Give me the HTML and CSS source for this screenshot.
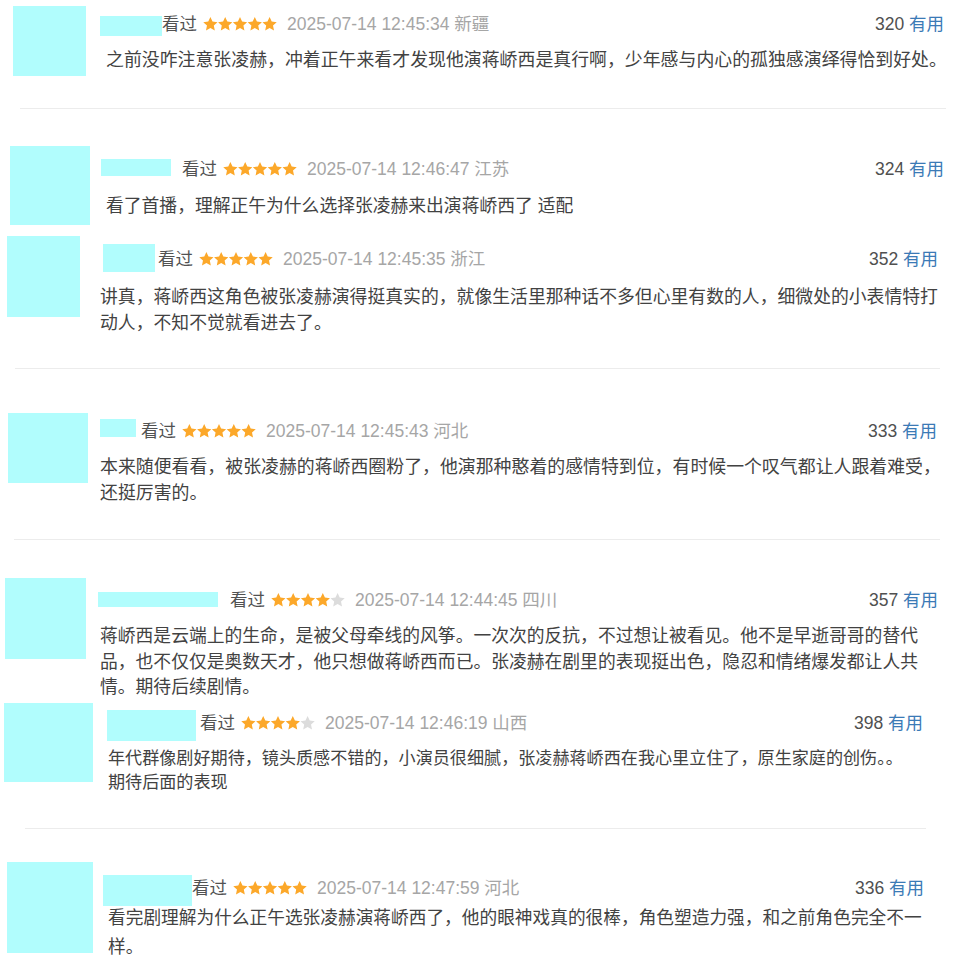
FILE: index.html
```html
<!DOCTYPE html>
<html lang="zh-CN">
<head>
<meta charset="utf-8">
<title>短评</title>
<link rel="stylesheet" href="styles.css">
</head>
<body>
<svg class="svg-defs" width="0" height="0" aria-hidden="true">
  <defs>
    <symbol id="star" viewBox="0 0 14.8 14">
      <polygon points="7.4,0 9.52,4.59 14.53,5.18 10.82,8.61 11.81,13.57 7.4,11.1 2.99,13.57 3.98,8.61 0.27,5.18 5.28,4.59"/>
    </symbol>
  </defs>
</svg>
<div class="page">

  <div class="review r1">
    <div class="avatar"></div>
    <div class="body">
      <div class="meta">
        <span class="mask"></span>
        <span class="watched">看过</span>
        <svg class="stars" viewBox="0 0 74 14"><use href="#star" class="on" x="0" width="14.8" height="14"/><use href="#star" class="on" x="14.8" width="14.8" height="14"/><use href="#star" class="on" x="29.6" width="14.8" height="14"/><use href="#star" class="on" x="44.4" width="14.8" height="14"/><use href="#star" class="on" x="59.2" width="14.8" height="14"/></svg>
        <span class="time">2025-07-14 12:45:34 新疆</span>
        <span class="votes"><span class="count">320</span> <span class="useful">有用</span></span>
      </div>
      <p class="text">之前没咋注意张凌赫，冲着正午来看才发现他演蒋峤西是真行啊，少年感与内心的孤独感演绎得恰到好处。</p>
    </div>
  </div>
  <div class="divider d1"></div>

  <div class="review r2">
    <div class="avatar"></div>
    <div class="body">
      <div class="meta">
        <span class="mask"></span>
        <span class="watched">看过</span>
        <svg class="stars" viewBox="0 0 74 14"><use href="#star" class="on" x="0" width="14.8" height="14"/><use href="#star" class="on" x="14.8" width="14.8" height="14"/><use href="#star" class="on" x="29.6" width="14.8" height="14"/><use href="#star" class="on" x="44.4" width="14.8" height="14"/><use href="#star" class="on" x="59.2" width="14.8" height="14"/></svg>
        <span class="time">2025-07-14 12:46:47 江苏</span>
        <span class="votes"><span class="count">324</span> <span class="useful">有用</span></span>
      </div>
      <p class="text">看了首播，理解正午为什么选择张凌赫来出演蒋峤西了 适配</p>
    </div>
  </div>

  <div class="review r3">
    <div class="avatar"></div>
    <div class="body">
      <div class="meta">
        <span class="mask"></span>
        <span class="watched">看过</span>
        <svg class="stars" viewBox="0 0 74 14"><use href="#star" class="on" x="0" width="14.8" height="14"/><use href="#star" class="on" x="14.8" width="14.8" height="14"/><use href="#star" class="on" x="29.6" width="14.8" height="14"/><use href="#star" class="on" x="44.4" width="14.8" height="14"/><use href="#star" class="on" x="59.2" width="14.8" height="14"/></svg>
        <span class="time">2025-07-14 12:45:35 浙江</span>
        <span class="votes"><span class="count">352</span> <span class="useful">有用</span></span>
      </div>
      <p class="text">讲真，蒋峤西这角色被张凌赫演得挺真实的，就像生活里那种话不多但心里有数的人，细微处的小表情特打<br>动人，不知不觉就看进去了。</p>
    </div>
  </div>
  <div class="divider d2"></div>

  <div class="review r4">
    <div class="avatar"></div>
    <div class="body">
      <div class="meta">
        <span class="mask"></span>
        <span class="watched">看过</span>
        <svg class="stars" viewBox="0 0 74 14"><use href="#star" class="on" x="0" width="14.8" height="14"/><use href="#star" class="on" x="14.8" width="14.8" height="14"/><use href="#star" class="on" x="29.6" width="14.8" height="14"/><use href="#star" class="on" x="44.4" width="14.8" height="14"/><use href="#star" class="on" x="59.2" width="14.8" height="14"/></svg>
        <span class="time">2025-07-14 12:45:43 河北</span>
        <span class="votes"><span class="count">333</span> <span class="useful">有用</span></span>
      </div>
      <p class="text">本来随便看看，被张凌赫的蒋峤西圈粉了，他演那种憨着的感情特到位，有时候一个叹气都让人跟着难受，<br>还挺厉害的。</p>
    </div>
  </div>
  <div class="divider d3"></div>

  <div class="review r5">
    <div class="avatar"></div>
    <div class="body">
      <div class="meta">
        <span class="mask"></span>
        <span class="watched">看过</span>
        <svg class="stars" viewBox="0 0 74 14"><use href="#star" class="on" x="0" width="14.8" height="14"/><use href="#star" class="on" x="14.8" width="14.8" height="14"/><use href="#star" class="on" x="29.6" width="14.8" height="14"/><use href="#star" class="on" x="44.4" width="14.8" height="14"/><use href="#star" class="off" x="59.2" width="14.8" height="14"/></svg>
        <span class="time">2025-07-14 12:44:45 四川</span>
        <span class="votes"><span class="count">357</span> <span class="useful">有用</span></span>
      </div>
      <p class="text">蒋峤西是云端上的生命，是被父母牵线的风筝。一次次的反抗，不过想让被看见。他不是早逝哥哥的替代<br>品，也不仅仅是奥数天才，他只想做蒋峤西而已。张凌赫在剧里的表现挺出色，隐忍和情绪爆发都让人共<br>情。期待后续剧情。</p>
    </div>
  </div>

  <div class="review r6">
    <div class="avatar"></div>
    <div class="body">
      <div class="meta">
        <span class="mask"></span>
        <span class="watched">看过</span>
        <svg class="stars" viewBox="0 0 74 14"><use href="#star" class="on" x="0" width="14.8" height="14"/><use href="#star" class="on" x="14.8" width="14.8" height="14"/><use href="#star" class="on" x="29.6" width="14.8" height="14"/><use href="#star" class="on" x="44.4" width="14.8" height="14"/><use href="#star" class="off" x="59.2" width="14.8" height="14"/></svg>
        <span class="time">2025-07-14 12:46:19 山西</span>
        <span class="votes"><span class="count">398</span> <span class="useful">有用</span></span>
      </div>
      <p class="text">年代群像剧好期待，镜头质感不错的，小演员很细腻，张凌赫蒋峤西在我心里立住了，原生家庭的创伤。。<br>期待后面的表现</p>
    </div>
  </div>
  <div class="divider d4"></div>

  <div class="review r7">
    <div class="avatar"></div>
    <div class="body">
      <div class="meta">
        <span class="mask"></span>
        <span class="watched">看过</span>
        <svg class="stars" viewBox="0 0 74 14"><use href="#star" class="on" x="0" width="14.8" height="14"/><use href="#star" class="on" x="14.8" width="14.8" height="14"/><use href="#star" class="on" x="29.6" width="14.8" height="14"/><use href="#star" class="on" x="44.4" width="14.8" height="14"/><use href="#star" class="on" x="59.2" width="14.8" height="14"/></svg>
        <span class="time">2025-07-14 12:47:59 河北</span>
        <span class="votes"><span class="count">336</span> <span class="useful">有用</span></span>
      </div>
      <p class="text">看完剧理解为什么正午选张凌赫演蒋峤西了，他的眼神戏真的很棒，角色塑造力强，和之前角色完全不一<br>样。</p>
    </div>
  </div>

</div>
</body>
</html>
```

FILE: styles.css
```css
html, body {
  margin: 0;
  padding: 0;
  background: #ffffff;
}

.svg-defs {
  display: block;
  width: 0;
  height: 0;
  overflow: hidden;
}

.page {
  display: flex;
  flex-direction: column;
  width: 960px;
  height: 960px;
  overflow: hidden;
  font-family: "Liberation Sans", "Noto Sans CJK SC", sans-serif;
  color: #424242;
}

/* ---------- review block ---------- */
.review {
  display: flex;
  align-items: flex-start;
  box-sizing: border-box;
  flex-shrink: 0;
  height: var(--h);
  margin-top: var(--mt);
  padding-right: var(--pr);
}

.avatar {
  flex-shrink: 0;
  margin-left: var(--ax);
  width: var(--aw);
  height: var(--ah);
  background: #b1fdfd;
}

.body {
  flex: 1;
  min-width: 0;
  margin-left: var(--bx);
  padding-top: var(--bt);
}

.meta {
  display: flex;
  align-items: center;
  height: 24px;
  line-height: 24px;
  font-size: 17.5px;
  white-space: nowrap;
}

.mask {
  align-self: flex-start;
  flex-shrink: 0;
  margin-top: var(--my);
  margin-left: var(--mx);
  margin-right: var(--mg);
  width: var(--mw);
  height: var(--mh);
  background: #b1fdfd;
}

.watched {
  color: #525252;
  margin-right: 6px;
}

.stars {
  width: 74px;
  height: 14px;
  flex-shrink: 0;
  margin-right: 10px;
}

.stars .on {
  fill: #fca82a;
}

.stars .off {
  fill: #dcdcdc;
}

.time {
  color: #a6a6a6;
}

.votes {
  margin-left: auto;
}

.count {
  color: #505050;
}

.useful {
  color: #3b7ab6;
}

.text {
  margin: var(--tm) 0 0;
  font-size: var(--fs);
  line-height: var(--lh);
  white-space: nowrap;
  color: #424242;
}

/* ---------- dividers ---------- */
.divider {
  flex-shrink: 0;
  height: 1px;
  background: #ececec;
  margin-left: var(--dx);
  width: var(--dw);
}

.d1 { --dx: 20px; --dw: 926px; }
.d2 { --dx: 15px; --dw: 925px; }
.d3 { --dx: 14px; --dw: 926px; }
.d4 { --dx: 25px; --dw: 901px; }

/* ---------- per-fragment geometry ---------- */
.r1 {
  --mt: 6px; --h: 102px; --pr: 16px;
  --ax: 13px; --aw: 73px; --ah: 70px;
  --bx: 20px; --bt: 6px;
  --mx: -6px; --my: 4px; --mw: 62px; --mh: 20px; --mg: 0px;
  --tm: 11px; --fs: 17.9px; --lh: 26px;
}

.r2 {
  --mt: 37px; --h: 90px; --pr: 16px;
  --ax: 10px; --aw: 80px; --ah: 79px;
  --bx: 16px; --bt: 11px;
  --mx: -5px; --my: 2px; --mw: 70px; --mh: 17px; --mg: 11px;
  --tm: 12px; --fs: 17.8px; --lh: 26px;
}

.r3 {
  --mt: 0px; --h: 132px; --pr: 22px;
  --ax: 7px; --aw: 73px; --ah: 81px;
  --bx: 20px; --bt: 11px;
  --mx: 3px; --my: -3px; --mw: 52px; --mh: 28px; --mg: 3px;
  --tm: 13px; --fs: 17.83px; --lh: 26px;
}

.r4 {
  --mt: 44px; --h: 126px; --pr: 23px;
  --ax: 8px; --aw: 80px; --ah: 70px;
  --bx: 12px; --bt: 6px;
  --mx: 0px; --my: 0px; --mw: 36px; --mh: 18px; --mg: 5px;
  --tm: 11px; --fs: 17.9px; --lh: 26px;
}

.r5 {
  --mt: 38px; --h: 125px; --pr: 22px;
  --ax: 5px; --aw: 81px; --ah: 81px;
  --bx: 14px; --bt: 10px;
  --mx: -2px; --my: 4px; --mw: 120px; --mh: 15px; --mg: 12px;
  --tm: 12px; --fs: 17.8px; --lh: 25.5px;
}

.r6 {
  --mt: 0px; --h: 125px; --pr: 37px;
  --ax: 4px; --aw: 89px; --ah: 79px;
  --bx: 15px; --bt: 8px;
  --mx: -1px; --my: -1px; --mw: 89px; --mh: 31px; --mg: 4px;
  --tm: 12px; --fs: 17.1px; --lh: 24px;
}

.r7 {
  --mt: 33px; --h: 98px; --pr: 36px;
  --ax: 7px; --aw: 86px; --ah: 91px;
  --bx: 15px; --bt: 14px;
  --mx: -5px; --my: -1px; --mw: 89px; --mh: 31px; --mg: 0px;
  --tm: 3.5px; --fs: 17.7px; --lh: 29px;
}
```
